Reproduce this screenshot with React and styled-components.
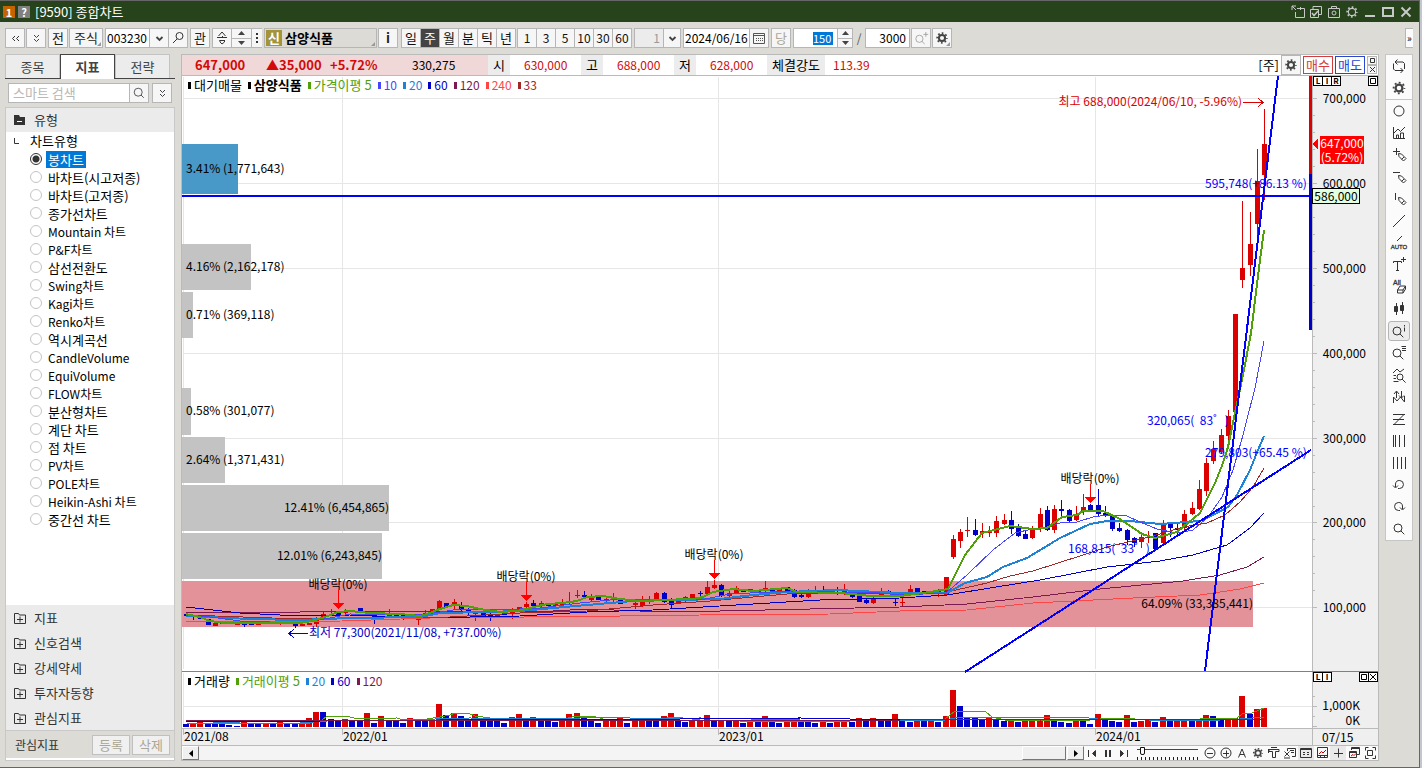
import React, { useState } from "react";
import styled, { createGlobalStyle, css } from "styled-components";

const GlobalStyle = createGlobalStyle`
  * {
    box-sizing: border-box;
  }

  body {
    margin: 0;
    background: #dcdbd6;
  }

  body, button, input, select {
    font-family: "Noto Sans CJK KR", "Noto Sans", sans-serif;
    font-size: 12px;
    line-height: 16px;
    color: #000;
  }

  button, input, select {
    margin: 0;
    padding: 0;
    border: 0;
    border-radius: 0;
    outline: none;
  }

  svg {
    display: block;
    flex: none;
  }
`;

/* ---------- frame ---------- */

const Shell = styled.div`
  border-right: 2px solid #c3c6cc;
`;

const Frame = styled.div`
  display: flex;
  flex-direction: column;
  min-height: 100vh;
  background: #dcdbd6;
  border-right: 1px solid #666;
  border-bottom: 1px solid #666;
`;

const TitleBar = styled.header`
  display: flex;
  align-items: center;
  gap: 3px;
  height: 22px;
  padding: 0 6px 0 3px;
  border-top: 1px solid #666;
  background: #26431c;
  color: #fff;
`;

const TitleBadge = styled.span`
  width: 12px;
  height: 12px;
  background: ${(p) => p.$color};
  font-size: 11px;
  font-weight: bold;
  line-height: 12px;
  text-align: center;
`;

const Title = styled.h1`
  flex: 1;
  margin: 0 0 0 2px;
  font-size: 13px;
  font-weight: normal;
  line-height: 20px;
`;

const TitleButton = styled.button`
  display: flex;
  align-items: center;
  justify-content: center;
  width: 15px;
  height: 20px;
  background: none;
  color: #c8c8c8;
`;

const Body = styled.div`
  display: flex;
  flex: 1;
  gap: 6px;
  padding: 0 6px 6px 5px;
`;

/* ---------- toolbar ---------- */

const Toolbar = styled.div`
  display: flex;
  align-items: center;
  gap: 1px;
  height: 32px;
  padding: 0 6px 0 5px;
`;

const Group = styled.div`
  display: flex;
  width: ${(p) => p.$w}px;
  height: 20px;
  margin-left: ${(p) => p.$space || 0}px;
  border: 1px solid #b6b6b6;
  background: #fff;

  & > * + * {
    border-left: 1px solid #b6b6b6;
  }
`;

const ToolButton = styled.button`
  position: relative;
  display: flex;
  align-items: center;
  justify-content: center;
  width: ${(p) => p.$w || 20}px;
  height: 20px;
  margin-left: ${(p) => p.$space || 0}px;
  border: 1px solid #b6b6b6;
  background: ${(p) => (p.$flat ? "#dcdbd6" : "#f6f6f6")};
  font-size: 13px;
  color: ${(p) => (p.$dim ? "#aaa695" : "#222")};
  white-space: nowrap;

  ${(p) =>
    p.$corner &&
    css`
      &::after {
        content: "";
        position: absolute;
        right: 1px;
        bottom: 1px;
        border: 2px solid transparent;
        border-right-color: #999;
        border-bottom-color: #999;
      }
    `}
`;

const NameButton = styled(ToolButton)`
  justify-content: flex-start;
  gap: 3px;
  padding-left: 1px;
  font-weight: bold;
  color: #000;
`;

const NameTag = styled.span`
  width: 16px;
  height: 16px;
  background: #a3943a;
  color: #fff;
  line-height: 15px;
`;

const Cell = styled.button`
  display: flex;
  flex: ${(p) => (p.$w ? "none" : "1")};
  align-items: center;
  justify-content: center;
  width: ${(p) => (p.$w ? `${p.$w}px` : "auto")};
  background: ${(p) => (p.$active ? "#444" : "#f6f6f6")};
  color: ${(p) => (p.$active ? "#fff" : "#111")};
  font-size: ${(p) => (p.$num ? 12 : 13)}px;
`;

const Field = styled.input`
  flex: 1;
  min-width: 0;
  padding: 0 ${(p) => (p.$tight ? 1 : 3)}px;
  background: #fff;
  text-align: ${(p) => p.$align || "left"};
`;

const SmallSelect = styled.select`
  flex: 1;
  min-width: 0;
  padding: 0 3px;
  appearance: none;
  background: #ececec;
  color: #999;
  text-align-last: right;
  opacity: 1;
`;

const SelectedField = styled.div`
  display: flex;
  flex: 1;
  align-items: center;
  justify-content: flex-end;
  padding-right: 4px;
`;

const SelectedInput = styled.input`
  width: 20px;
  height: 13px;
  background: #0078d7;
  color: #fff;
  font-size: 11px;
  line-height: 13px;
`;

const Spinner = styled.div`
  display: flex;
  flex: none;
  flex-direction: column;
  width: ${(p) => p.$w}px;
  background: #f6f6f6;

  & > button + button {
    border-top: 1px solid #b6b6b6;
  }
`;

const SpinButton = styled.button`
  display: flex;
  flex: 1;
  align-items: center;
  justify-content: center;
  background: #f6f6f6;
`;

const Slash = styled.span`
  width: 10px;
  text-align: center;
  color: #555;
`;

const Spacer = styled.div`
  flex: 1;
`;

const MoreButton = styled.button`
  width: 8px;
  height: 20px;
  border: 1px solid #b6b6b6;
  border-right: 0;
  background: #fbfbfb;
  font-size: 10px;
  line-height: 18px;
`;

/* ---------- sidebar ---------- */

const Sidebar = styled.aside`
  display: flex;
  flex: none;
  flex-direction: column;
  width: 170px;
`;

const Tabs = styled.div`
  display: flex;
  height: 25px;
  padding-right: 5px;
  border-bottom: 1px solid #444;
`;

const Tab = styled.button`
  flex: 1;
  height: ${(p) => (p.$active ? 25 : 24)}px;
  border: 1px solid #c3c3c3;
  border-bottom: 0;
  background: #ececec;
  color: #444;
  font-size: 13px;

  ${(p) =>
    p.$active &&
    css`
      border-color: #444;
      background: #fff;
      font-weight: bold;
    `}
`;

const SearchRow = styled.form`
  display: flex;
  gap: 3px;
  padding: 4px 3px;
`;

const SearchInput = styled(Field)`
  padding: 0 4px;
  font-size: 13px;

  &::placeholder {
    color: #b8b8b8;
  }
`;

const Panel = styled.section`
  display: flex;
  flex: 1;
  flex-direction: column;
  border: 1px solid #c8c8c8;
  background: #fff;
`;

const SectionButton = styled.button`
  display: flex;
  align-items: center;
  gap: 8px;
  height: ${(p) => (p.$open ? 24 : 25)}px;
  padding-left: 8px;
  background: #ebebeb;
  color: #333;
  font-size: 13px;
  text-align: left;
`;

const TypeList = styled.fieldset`
  flex: 1;
  margin: 0;
  padding: 0 0 0 24px;
  border: 0;
  background: #fff;
`;

const TypeLegend = styled.legend`
  display: flex;
  align-items: center;
  gap: 10px;
  height: 18px;
  margin-left: -16px;
  padding: 0;
  font-size: 13px;
  line-height: 18px;
`;

const TypeRow = styled.label`
  display: flex;
  align-items: center;
  gap: 4px;
  height: 18px;
`;

const Radio = styled.input`
  flex: none;
  width: 12px;
  height: 12px;
  appearance: none;
  border: 1px solid #c4c4c4;
  border-radius: 50%;
  background: #fff;

  &:checked {
    border-color: #333;
    background: radial-gradient(circle, #333 0 3px, #fff 4px);
  }
`;

const TypeName = styled.span`
  height: 17px;
  padding: 0 2px;
  background: ${(p) => (p.$on ? "#0078d7" : "none")};
  color: ${(p) => (p.$on ? "#fff" : "#000")};
  font-size: ${(p) => (p.$latin ? 12 : 13)}px;
  line-height: 17px;
  white-space: nowrap;
`;

const PanelFooter = styled.div`
  display: flex;
  align-items: center;
  gap: 2px;
  height: 30px;
  padding: 0 4px 0 9px;
  border-top: 1px solid #c8c8c8;
  border-bottom: 2px solid #fff;
  background: #dcdbd6;
  color: #333;
`;

const FooterLabel = styled.span`
  flex: 1;
`;

const FooterButton = styled.button`
  width: 38px;
  height: 20px;
  border: 1px solid #c0c0c0;
  background: #f0f0f0;
  color: #aaa695;
  font-size: 13px;
`;

/* ---------- chart panel ---------- */

const ChartPanel = styled.main`
  flex: 1;
  min-width: 0;
  border: 1px solid #bababa;
  background: #fff;
`;

const QuoteBar = styled.div`
  display: flex;
  align-items: stretch;
  height: 21px;
  border-bottom: 1px solid #bababa;
  line-height: 20px;
`;

const QuoteMain = styled.div`
  display: flex;
  width: 306px;
  padding-left: 13px;
  background: #f0d8d8;
`;

const Price = styled.strong`
  width: ${(p) => p.$w}px;
  color: #d20a0a;
  font-size: 13px;
  white-space: nowrap;
`;

const QuoteLabel = styled.span`
  width: ${(p) => p.$w || 22}px;
  background: #ececec;
  font-size: 13px;
  text-align: center;
`;

const QuoteValue = styled.span`
  width: 71px;
  padding-left: ${(p) => p.$pad || 14}px;
  color: #d20a0a;
`;

const QuoteActions = styled.div`
  display: flex;
  flex: 1;
  align-items: center;
  justify-content: flex-end;
  gap: 2px;
  padding-right: 1px;
  font-size: 13px;
`;

const TradeButton = styled.button`
  width: 30px;
  height: 18px;
  border: 1px solid ${(p) => p.$color};
  background: #fff;
  color: ${(p) => p.$color};
  font-size: 13px;
  line-height: 16px;
`;

const MiniStack = styled.div`
  display: flex;
  flex-direction: column;
`;

const MiniButton = styled.button`
  display: flex;
  align-items: center;
  justify-content: center;
  width: 10px;
  height: 9px;
  border: 1px solid #b6b6b6;
  background: #f6f6f6;
`;

const Pane = styled.div`
  position: relative;
  border-bottom: 1px solid ${(p) => p.$line || "#bababa"};
`;

const ChartSvg = styled.svg`
  width: 100%;
  height: auto;
  overflow: visible;
  shape-rendering: crispEdges;
`;

const Legend = styled.div`
  position: absolute;
  top: 1px;
  left: 6px;
  display: flex;
  gap: 6px;
`;

const LegendItem = styled.span`
  display: flex;
  align-items: center;
  gap: 3px;
  color: ${(p) => p.$color};
  font-size: ${(p) => (p.$num ? 12 : 13)}px;
  font-weight: ${(p) => (p.$bold ? "bold" : "normal")};

  &::before {
    content: "";
    width: 3px;
    height: 7px;
    background: ${(p) => p.$color};
  }
`;

const ScaleButtons = styled.div`
  position: absolute;
  top: 0;
  right: 0;
  display: flex;
  justify-content: space-between;
  width: 65px;
  height: 10px;
`;

const ScaleSet = styled.div`
  display: flex;
`;

const ScaleButton = styled.button`
  display: flex;
  align-items: center;
  justify-content: center;
  width: 10px;
  height: 10px;
  margin-right: -1px;
  border: 1px solid #000;
  background: #fff;
  font-size: 8px;
  font-weight: bold;
  line-height: 8px;

  &:last-child {
    margin-right: 0;
  }
`;

const ScrollRow = styled.div`
  display: flex;
  height: 14px;
`;

const Track = styled.div`
  display: flex;
  flex: 1;
  justify-content: flex-end;
  padding-right: 1px;
  background: #f4f4f4;
`;

const ScrollButton = styled.button`
  display: flex;
  align-items: center;
  justify-content: center;
  width: ${(p) => p.$w}px;
  height: 14px;
  border: 1px solid #fff;
  border-right-color: #777;
  border-bottom-color: #777;
  background: #f0f0f0;
`;

const FootButton = styled.button`
  display: flex;
  align-items: center;
  justify-content: center;
  width: 16px;
  height: 14px;
  background: ${(p) => (p.$on ? "#e9e9e9" : "#fafafa")};
`;

const ZoomBox = styled.div`
  width: 70px;
  padding: 0 4px 0 5px;
  background: #fafafa;
`;

const ZoomRange = styled.input`
  display: block;
  width: 100%;
  height: 14px;
  appearance: none;
  background:
    linear-gradient(#444, #444) 0 3px / 100% 1px no-repeat,
    repeating-linear-gradient(90deg, #222 0 1px, transparent 1px 4px) 0 11px / 100% 3px no-repeat;

  &::-webkit-slider-thumb {
    width: 5px;
    height: 8px;
    margin-top: -4px;
    appearance: none;
    border: 1px solid #111;
    border-radius: 0 0 2px 2px;
    background: #fff;
  }
`;

/* ---------- drawing tools ---------- */

const Tools = styled.nav`
  align-self: flex-start;
  flex: none;
  width: 28px;
  border: 1px solid #c6c6c6;
  background: #fbfbfb;
`;

const ToolItem = styled.button`
  display: flex;
  align-items: center;
  justify-content: center;
  width: 22px;
  height: ${(p) => (p.$on ? 20 : 22)}px;
  margin: ${(p) => (p.$on ? "1px 2px" : "0 2px")};
  border: ${(p) => (p.$on ? "1px solid #b4b4b4" : "0")};
  border-radius: 3px;
  background: ${(p) => (p.$on ? "#ececec" : "none")};
`;

const ToolDivider = styled.hr`
  height: 1px;
  margin: 0;
  border: 0;
  background: #c6c6c6;
`;

/* ---------- icons ---------- */

const Icon = ({ size = 20, box = 20, color = "#333", children }) => (
  <svg
    width={size}
    height={size}
    viewBox={`0 0 ${box} ${box}`}
    fill="none"
    stroke={color}
    aria-hidden="true"
  >
    {children}
  </svg>
);

const Gear = ({ size = 20, color = "#444", thin }) => (
  <Icon size={size} color={color}>
    <circle cx="10" cy="10" r={thin ? 4 : 3.4} strokeWidth={thin ? 1.2 : 2.2} />
    <circle cx="10" cy="10" r="5.4" strokeWidth="1.8" strokeDasharray="1.9 2.34" strokeDashoffset="0.95" />
  </Icon>
);

const Lens = ({ x = 9, y = 9, r = 4 }) => (
  <path d={`M${x - r} ${y}a${r} ${r} 0 1 0 ${2 * r} 0a${r} ${r} 0 1 0 ${-2 * r} 0M${x + r * 0.7} ${y + r * 0.7}l3.5 3.5`} />
);

const Pencil = () => <path d="M9.5 8.5l.5 3 4.500 4.500 2.500-2.500-4.500-4.500zM12.500 14.500l2.500-2.500" />;

const Chevron = () => (
  <Icon size={9} box={9} color="#444">
    <path d="M1.5 3l3 3 3-3" strokeWidth="1.8" />
  </Icon>
);

const DoubleDown = () => (
  <Icon size={9} box={9} color="#444">
    <path d="M2 1l2.5 2.5L7 1M2 5l2.5 2.5L7 5" />
  </Icon>
);

const Triangle = ({ dir }) => (
  <svg width="7" height="4" viewBox="0 0 7 4" fill="#444" aria-hidden="true">
    <path d={{ up: "M0 4h7L3.5 0z", down: "M0 0h7L3.5 4z" }[dir]} />
  </svg>
);

const SideTriangle = ({ dir }) => (
  <svg width="4" height="7" viewBox="0 0 4 7" fill="#000" aria-hidden="true">
    <path d={dir === "left" ? "M4 0v7L0 3.5z" : "M0 0v7L4 3.5z"} />
  </svg>
);

const FolderPlus = () => (
  <Icon size={12} box={12} color="#333">
    <path d="M0.5 11.500V1.500h4l1 1.500h6v8.500zM3 7.500h6M6 4.500v6" />
  </Icon>
);

const FolderMinus = () => (
  <svg width="12" height="12" viewBox="0 0 12 12" aria-hidden="true">
    <path d="M0 11V1h5l1 2h5v8z" fill="#333" />
    <path d="M3 7.500h5" stroke="#fff" />
  </svg>
);

const drawTools = [
  ["반복", <path d="M15.5 13V7.500l-1.500-1.500H6M8.500 3.500L6 6l2.500 2.500M4.500 7.500V13l1.500 1.500h8M11.500 12l2.500 2.500-2.500 2.500" />],
  ["설정", null],
  ["원", <circle cx="10" cy="10" r="5" />],
  ["지표 추가", <path d="M4.5 4v11.500H16M5 10l4-4 2.500 2.500L16 4M7.500 15v-3h2v3M11.500 15v-5h3v5" />],
  ["십자선", <><path d="M4 6.500h7M7.500 3v7" /><Pencil /></>],
  ["수평선", <><path d="M4 5.500h7" /><Pencil /></>],
  ["수직선", <><path d="M6.500 4v7" /><Pencil /></>],
  ["추세선", <path d="M4 16L16 4" />],
  ["자동추세선", <><path d="M8 8l5-5" /><text x="10" y="16" textAnchor="middle" fontSize="6" fontFamily="Liberation Sans" fill="#333" strokeWidth="0.3">AUTO</text></>],
  ["문자", <path d="M4.500 8V6.500h8V8M8.500 6.500v9M7 15.500h3M12 4.500h5M14.500 2v5" />],
  ["전체 지우기", <><text x="4" y="8" fontSize="7" fontFamily="Liberation Sans" fill="#333" strokeWidth="0.3">All</text><path d="M8.500 13l2.500-4h5.500v3L14 16H8.500zM8.500 13H14l2.500-4M14 13v3" /></>],
  ["캔들", <><path d="M7.500 4v12M13.500 3v12" /><path d="M5.500 7.500h3v5h-3zM11.500 6.500h3v5h-3z" fill="#333" /></>],
  ["정보 보기", <><Lens x={8} y={10} /><path d="M15.500 6.500v4M15.500 4v1.500" /></>],
  ["목록 보기", <><Lens x={8} y={10} /><path d="M12.500 3.500H17M13 5.500h4M13 7.500h4" /></>],
  ["패턴 검색", <><Lens x={11} y={12} r={3} /><path d="M4 8l4-4 3 3 4-3M4.500 10.500H7M4.500 13.500H7M4.500 16.500h5" /></>],
  ["비교", <path d="M4.500 16v-6l3.500 4 3.500-4 4 5v-6M7.500 11V4.500M5 7l2.500-3L10 7M12.500 4v6.500M10 8.500l2.500 2.500L15 8.500" />],
  ["피보나치", <path d="M4 5.500h12M4 10.500h11M4 15.500h12M15 5.500L5 15.500" />],
  ["시간대", <path d="M4.500 4v12M6.500 4v12M10.500 4v12M15.500 4v12" />],
  ["등간격", <path d="M4.500 4v12M8.500 4v12M12.500 4v12M16.500 4v12" />],
  ["되돌리기", <path d="M6.500 12V9a4 4 0 1 1 4 4.500H9M4 10.500l2.500 2.500L9 10.500" />],
  ["다시하기", <path d="M13.500 12V9a4 4 0 1 0-4 4.500H11M11 10.500l2.500 2.500 2.500-2.500" />],
  ["확대", <Lens />],
];

/* ---------- data ---------- */

const chartTypes = [
  "봉차트", "바차트(시고저종)", "바차트(고저종)", "종가선차트", "Mountain 차트", "P&F차트",
  "삼선전환도", "Swing차트", "Kagi차트", "Renko차트", "역시계곡선", "CandleVolume",
  "EquiVolume", "FLOW차트", "분산형차트", "계단 차트", "점 차트", "PV차트",
  "POLE차트", "Heikin-Ashi 차트", "중간선 차트",
];

const sections = ["지표", "신호검색", "강세약세", "투자자동향", "관심지표"];

const RED = "#dc0000";
const BLUE = "#0000c8";

// [up, body top, body bottom, wick top, wick bottom]
const candles = [
  [0, 614, 616], [0, 616, 617, 615, 620], [0, 616, 619], [0, 619, 625], [1, 623, 626], [1, 621, 624],
  [0, 622, 624], [1, 623, 625], [0, 623, 625, 622, 627], [0, 623, 625], [1, 623, 625], [0, 622, 624],
  [0, 622, 624], [1, 621, 624, 619, 625], [0, 622, 624], [0, 624, 626, 623, 628], [1, 624, 626], [1, 623, 625],
  [1, 619, 624, 617, 627], [1, 614, 619, 611, 620], [1, 614, 615, 609, 616], [0, 611, 616], [1, 611, 613, 609, 614], [1, 610, 612],
  [0, 608, 613], [0, 611, 615], [0, 614, 620, 612, 624], [0, 616, 618], [1, 613, 617, 609, 618], [0, 614, 616],
  [0, 615, 617, 613, 620], [0, 615, 617], [1, 619, 620, 617, 625], [1, 613, 614, 610, 616], [1, 609, 613], [1, 601, 609, 600, 610],
  [0, 603, 607], [1, 602, 606, 599, 609], [0, 605, 610, 602, 611], [0, 609, 611, 608, 615], [1, 613, 614, 612, 621], [0, 613, 617],
  [0, 614, 616, 613, 621], [1, 614, 616], [0, 613, 615], [1, 609, 613, 608, 619], [1, 607, 609], [1, 604, 607, 602, 608],
  [0, 603, 606, 600, 607], [1, 603, 605, 601, 607], [0, 603, 606], [1, 604, 606], [1, 603, 605, 599, 606], [1, 601, 603, 592, 604],
  [1, 595, 596, 590, 598], [0, 595, 597, 591, 598], [1, 596, 600, 594, 601], [0, 596, 600], [1, 599, 601, 597, 604], [1, 597, 600, 593, 602],
  [0, 598, 604], [0, 600, 602], [1, 603, 605, 602, 609], [1, 600, 606, 596, 607], [1, 599, 600, 596, 604], [1, 593, 599, 592, 600],
  [0, 593, 602, 592, 603], [0, 599, 605, 598, 608], [1, 601, 604], [1, 597, 601, 596, 603], [1, 594, 598], [0, 593, 594, 591, 596],
  [1, 587, 594, 581, 595], [1, 585, 588, 580, 589], [0, 585, 596, 584, 597], [1, 593, 596, 591, 597], [1, 588, 593, 586, 594], [0, 589, 592],
  [1, 589, 591], [1, 591, 593], [1, 588, 590, 581, 592], [0, 589, 591], [1, 588, 591], [0, 587, 591],
  [0, 590, 597, 589, 598], [0, 595, 597, 592, 598], [1, 590, 597, 589, 598], [1, 590, 592, 586, 593], [0, 590, 592, 586, 593], [0, 591, 594],
  [0, 592, 594, 587, 595], [1, 590, 594, 584, 595], [0, 593, 597, 592, 598], [0, 596, 602], [0, 600, 603, 599, 604], [1, 598, 603, 597, 604],
  [1, 592, 595, 588, 596], [0, 591, 593, 590, 594], [0, 602, 603, 599, 606], [1, 602, 603, 598, 606], [1, 589, 592, 585, 594], [0, 588, 592],
  [0, 591, 593], [0, 592, 594], [1, 590, 594, 589, 597], [1, 577, 595], [1, 539, 557, 535, 559], [1, 532, 541, 529, 548],
  [1, 530, 531, 517, 537], [0, 530, 535, 519, 536], [1, 531, 533, 523, 538], [1, 532, 533, 526, 537], [1, 521, 533, 516, 537], [1, 520, 524, 514, 525],
  [0, 520, 529, 511, 534], [0, 528, 536, 524, 537], [0, 534, 539, 530, 539], [1, 529, 538, 526, 539], [1, 514, 528, 508, 532], [0, 510, 530, 506, 531],
  [1, 509, 530, 505, 533], [0, 509, 511, 500, 516], [0, 510, 521, 509, 522], [1, 515, 520, 506, 521], [1, 507, 511, 494, 515], [0, 505, 510, 504, 511],
  [0, 505, 514, 489, 516], [0, 513, 516, 506, 517], [0, 515, 529, 514, 531], [0, 528, 531, 523, 532], [0, 530, 540, 529, 545], [0, 538, 543, 537, 547],
  [1, 537, 542, 535, 548], [1, 537, 538, 531, 543], [0, 533, 549], [1, 525, 543, 520, 544], [0, 524, 528, 523, 537], [0, 528, 530, 523, 535],
  [1, 514, 528, 510, 531], [1, 508, 514, 502, 515], [1, 489, 509, 480, 510], [1, 463, 491, 458, 496], [1, 449, 461, 441, 464], [1, 435, 452, 429, 454],
  [1, 416, 436, 410, 443], [1, 314, 412], [1, 268, 280, 201, 288], [1, 244, 265, 212, 276], [1, 181, 224, 149, 237], [1, 144, 175, 109, 200],
];

const volumes = [
  3, 4, 5, 3, 3, 3, 2, 1, 5, 4, 3, 4, 4, 5, 3, 3, 4, 9, 15, 15, 8, 6, 8, 6, 6, 14, 4, 11, 6, 6, 4, 9, 6,
  6, 7, 23, 12, 14, 11, 6, 13, 9, 8, 6, 4, 10, 13, 7, 10, 9, 6, 5, 9, 13, 14, 9, 7, 4, 7, 8, 10, 4, 7, 8,
  7, 6, 11, 14, 6, 5, 6, 7, 12, 6, 7, 6, 7, 4, 6, 5, 11, 6, 4, 6, 8, 5, 5, 4, 5, 4, 5, 6, 5, 9, 6, 9, 6, 6,
  13, 6, 5, 6, 6, 8, 5, 11, 37, 21, 10, 9, 8, 9, 7, 6, 7, 5, 6, 7, 8, 12, 7, 5, 4, 8, 6, 3, 13, 7, 6, 5, 12,
  5, 6, 7, 5, 10, 6, 7, 8, 6, 7, 12, 11, 7, 8, 9, 31, 13, 18, 19,
];

const averages = [
  { color: "#ff4646", points: "186,622 342,621 430,618 620,616 700,615 830,614 900,611 967,610 1033,603 1133,598 1200,595 1240,589 1264,583" },
  { color: "#7d1950", points: "186,612 300,612 342,611 553,611 587,609 640,611 720,611 900,607 967,604 1033,597 1100,589 1183,581 1220,575 1247,567 1264,557" },
  { color: BLUE, points: "186,607 240,613 300,616 350,615 420,618 520,616 587,612 653,610 753,604 820,600 900,598 947,595 990,588 1040,580 1107,567 1160,561 1193,555 1227,545 1250,528 1264,513" },
  { color: "#a02828", points: "186,615 300,619 346,618 450,617 520,613 587,611 653,605 710,601 753,597 787,594 900,593 947,592 987,583 1010,576 1033,571 1080,556 1107,547 1153,536 1183,527 1207,523 1225,515 1240,502 1253,487 1264,468" },
  { color: "#1e82d7", width: 2, points: "186,616 250,619 300,620 350,618 420,617 440,613 487,612 520,611 587,605 633,601 720,599 753,595 787,592 837,590 900,593 947,593 965,583 987,577 1003,567 1027,558 1060,538 1090,524 1107,521 1130,521 1160,524 1200,521 1213,515 1228,507 1237,495 1250,470 1258,450 1264,436" },
  { color: "#4646ff", points: "186,615 210,617 240,621 300,623 330,618 350,614 420,615 460,609 500,610 540,608 580,603 620,599 700,600 730,594 790,591 880,593 900,595 946,593 967,575 993,550 1015,533 1032,529 1047,528 1060,523 1077,522 1093,517 1107,515 1127,516 1140,522 1157,529 1177,533 1193,530 1208,517 1222,497 1233,470 1243,435 1255,388 1264,341" },
  { color: "#50a00a", width: 2, points: "186,614 200,617 210,621 225,623 300,623 312,621 325,617 338,612 350,611 370,613 400,614 420,616 427,614 440,609 453,605 467,606 480,609 500,612 517,611 530,608 547,604 563,603 577,601 587,597 603,596 620,599 640,601 660,600 693,599 703,597 713,592 733,589 753,591 787,588 797,592 837,593 853,594 870,596 900,596 930,592 948,589 965,555 982,533 1010,526 1033,529 1047,528 1062,517 1077,515 1083,511 1103,511 1120,519 1142,534 1155,538 1177,532 1200,513 1215,483 1223,463 1228,447 1235,413 1242,380 1251,333 1260,260 1264,230" },
];

const volumeAverages = [
  { color: "#50a00a", points: "186,723 240,724 290,724 310,723 322,720 327,716 346,716 358,719 397,718 403,720 420,720 440,717 450,715 455,713 468,713 475,716 490,718 520,719 550,720 565,719 575,716 593,716 603,719 660,719 675,717 700,720 740,721 850,721 900,719 945,719 955,711 985,711 992,717 1010,721 1040,720 1080,721 1100,719 1130,718 1140,720 1200,719 1237,718 1242,714 1252,713 1264,708" },
  { color: "#1e82d7", points: "186,721 240,723 300,723 340,720 400,720 470,718 560,719 600,717 660,719 700,718 800,720 940,721 960,717 1080,717 1098,719 1200,721 1240,719 1264,717" },
  { color: BLUE, points: "186,721 320,721 440,720 680,719 800,718 900,720 1264,719" },
  { color: "#7d1950", points: "186,720 440,720 600,720 900,720 1264,719" },
];

const profile = [
  { y: 144, h: 50, w: 56, fill: "#4898c8", label: "3.41% (1,771,643)" },
  { y: 244, h: 46, w: 69, label: "4.16% (2,162,178)" },
  { y: 292, h: 46, w: 11, label: "0.71% (369,118)" },
  { y: 388, h: 47, w: 9, label: "0.58% (301,077)" },
  { y: 437, h: 46, w: 43, label: "2.64% (1,371,431)" },
  { y: 485, h: 46, w: 207, label: "12.41% (6,454,865)", end: true },
  { y: 533, h: 46, w: 200, label: "12.01% (6,243,845)", end: true },
  { y: 581, h: 46, w: 1071, fill: "#e49299", label: "64.09% (33,385,441)", end: true },
];

const priceGrid = [
  [98, "700,000"], [183, "600,000"], [268, "500,000"], [353, "400,000"],
  [438, "300,000"], [522, "200,000"], [607, "100,000"],
];

const yearGrid = [342, 718, 1095];

const exDividends = [[338, 590], [526, 582], [714, 560], [1090, 484]];

const barX = (i) => Math.round(186 + i * 7.235);

const priceLegend = [
  ["대기매물", "#000"], ["삼양식품", "#000", "bold"], ["가격이평 5", "#50a00a"], ["10", "#4646ff"],
  ["20", "#1e82d7"], ["60", BLUE], ["120", "#7d1950"], ["240", "#ff4646"], ["33", "#a02828"],
];

const volumeLegend = [
  ["거래량", "#000"], ["거래이평 5", "#50a00a"], ["20", "#1e82d7"], ["60", BLUE], ["120", "#7d1950"],
];

/* ---------- parts ---------- */

const Legends = ({ items }) => (
  <Legend>
    {items.map(([name, color, bold]) => (
      <LegendItem key={name} $color={color} $bold={bold} $num={/^\d/.test(name)}>
        {name}
      </LegendItem>
    ))}
  </Legend>
);

const Lines = ({ items }) =>
  items.map((line) => (
    <polyline key={line.color} points={line.points} fill="none" stroke={line.color} strokeWidth={line.width || 1} />
  ));

const PriceChart = () => (
  <ChartSvg viewBox="182 76 1196 595" fontSize="12" role="img" aria-label="삼양식품 주봉 차트">
    <g stroke="#e6e6e6">
      {priceGrid.map(([y]) => <path key={y} d={`M183 ${y + 0.5}H1312`} />)}
      {[183, ...yearGrid].map((x) => <path key={x} d={`M${x + 0.5} 77V669`} />)}
    </g>

    {profile.map((p) => <rect key={p.y} x="182" y={p.y} width={p.w} height={p.h} fill={p.fill || "#c3c3c3"} />)}

    {candles.map(([up, top, bottom, high = top, low = bottom], i) => (
      <g key={i} fill={up ? RED : BLUE}>
        <rect x={barX(i)} y={high} width="1" height={low - high} />
        <rect x={barX(i) - 2} y={top} width="5" height={bottom - top} />
      </g>
    ))}
    <Lines items={averages} />

    <g stroke="#0000ff" strokeWidth="2">
      <path d="M182 196H1310" />
      <path d="M965 672L1311 450" />
      <path d="M1205 671L1278 76" />
    </g>

    {profile.map((p) => (
      <text key={p.y} x={p.end ? 182 + p.w : 186} y={p.y + (p.y === 144 ? 29 : 27)} textAnchor={p.end ? "end" : "start"}>
        {p.label}
      </text>
    ))}

    {exDividends.map(([x, y]) => (
      <g key={x}>
        <text x={x} y={y - 1} textAnchor="middle">배당락(0%)</text>
        <path d={`M${x + 0.5} ${y}v14`} stroke="#ff0000" />
        <path d={`M${x - 5} ${y + 13}h11l-5.5 6z`} fill="#ff0000" />
      </g>
    ))}

    <g fill={BLUE}>
      <text x="309" y="637">최저 77,300(2021/11/08, +737.00%)</text>
      <path d="M308 633.5H289M294 629l-5 4.5 5 4.5" fill="none" stroke={BLUE} />
    </g>
    <g fill={RED}>
      <text x="1242" y="106" textAnchor="end">최고 688,000(2024/06/10, -5.96%)</text>
      <path d="M1243 102.5h20M1258 98l5 4.5-5 4.5" fill="none" stroke={RED} />
    </g>
    <g fill="#0000ff">
      <text x="1205" y="188">595,748(+86.13 %)</text>
      <text x="1147" y="425">{"320,065(\u00a0 83˚\u00a0 \u00a0)"}</text>
      <text x="1205" y="457">279,803(+65.45 %)</text>
      <text x="1068" y="553">{"168,815(\u00a0 33˚\u00a0 \u00a0)"}</text>
    </g>

    <rect x="1309" y="76" width="3" height="98" fill={RED} />
    <rect x="1309" y="174" width="3" height="156" fill={BLUE} />

    <rect x="1312" y="76" width="66" height="595" fill="#efefef" />
    <path d="M1312.5 76V671" stroke="#bababa" />
    {priceGrid.map(([y, label], i) => (
      <g key={y}>
        <path d={`M1312 ${y + 0.5}h5`} stroke="#bababa" />
        {i < 6 && [17, 34, 51, 68].map((d) => <path key={d} d={`M1312 ${y + d + 0.5}h3`} stroke="#bababa" />)}
        <text x="1366" y={y + 5} textAnchor="end">{label}</text>
      </g>
    ))}
    <path d="M1318 138v12l-6-6z" fill="#ff0000" />
    <rect x="1320" y="136" width="44" height="28" fill="#ff0000" />
    <text x="1342" y="148" textAnchor="middle" fill="#fff">647,000</text>
    <text x="1342" y="162" textAnchor="middle" fill="#fff">(5.72%)</text>
    <rect x="1312.5" y="188.5" width="47" height="15" fill="#e1ffe1" stroke="#000" />
    <text x="1336" y="201" textAnchor="middle">586,000</text>
  </ChartSvg>
);

// a volume bar is red when it is higher than the one before it
const VolumeChart = () => (
  <ChartSvg viewBox="182 672 1196 56" fontSize="12" role="img" aria-label="거래량">
    <g stroke="#e6e6e6">
      <path d="M183 706.5H1312" />
      {[183, ...yearGrid].map((x) => <path key={x} d={`M${x + 0.5} 673V727`} />)}
    </g>
    {volumes.map((v, i) => (
      <rect key={i} x={barX(i) - 3} y={727 - v} width="6" height={v} fill={v > volumes[i - 1] ? RED : BLUE} />
    ))}
    <Lines items={volumeAverages} />
    <rect x="1312" y="672" width="66" height="56" fill="#efefef" />
    <path d="M1312.5 672v56M1312 696.5h3M1312 706.5h5M1312 716.5h3M1312 726.5h5" stroke="#bababa" />
    <text x="1360" y="710" textAnchor="end">1,000K</text>
    <text x="1360" y="725" textAnchor="end">0K</text>
  </ChartSvg>
);

const DateAxis = () => (
  <ChartSvg viewBox="182 729 1196 16" fontSize="12" role="img" aria-label="날짜">
    <rect x="182" y="729" width="1196" height="16" fill="#efefef" />
    <path d="M183.5 729v6M342.5 729v6M718.5 729v6M1095.5 729v6M1312.5 729v16" stroke="#bababa" />
    <text x="184" y="741">2021/08</text>
    <text x="343" y="741">2022/01</text>
    <text x="719" y="741">2023/01</text>
    <text x="1096" y="741">2024/01</text>
    <text x="1322" y="742">07/15</text>
  </ChartSvg>
);

const footIcons = [
  ["축소", <><circle cx="8" cy="7" r="5" /><path d="M5 7.5h6" /></>],
  ["확대", <><circle cx="8" cy="7" r="5" /><path d="M5 7.5h6M8.5 4.5v6" /></>],
  ["글꼴", <path d="M4.5 11.5L8 3l3.5 8.5M6 8.5h4" />],
  ["설정", "gear"],
  ["도구", <path d="M3 3.5h10v2H9.5v6h-3v-6H3zM5 1.5h6M2.5 3v4" />],
  ["저장", <path d="M5.5 5V2.500h8v8H10M8 4.500h4M9 6.500h3M2.500 5.500l5 5M2.500 10.500l5-5M2 12h6" />],
  ["표", <><path d="M2.500 2.500h11v9h-11zM2.500 3.500h11" /><path d="M5 6.500h2M5 8.500h2M9 6.500h2M9 8.500h2" /></>, true],
  ["차트 보기", <><path d="M3.500 1.500h10v10h-10zM3.500 9.500h10M6.500 9.500v2M10.500 9.500v2" /><path d="M5 8l2.500-2.500L9 7l3-3" stroke="#c00000" /></>],
  ["십자선", <path d="M8.500 2.500v9M4 7.500h9" />, true],
  ["새 창", <><path d="M5.500 4V1.500h8v7H11M5.500 2.500h8" /><path d="M3.500 5.500h7v6h-7zM3.500 6.500h7" /><path d="M5 10l2-1.500 1 1 2-2" stroke="#c00000" /></>],
  ["전체화면", <path d="M5.500 4.500h5v5h-5zM3.500 4.500v-3h3M10.500 1.500h3v3M13.500 9.500v3h-3M6.500 12.500h-3v-3" />],
];

const TopToolbar = () => {
  const [period, setPeriod] = useState("주");

  return (
    <Toolbar>
      <ToolButton aria-label="이전">
        <Icon size={9} box={9}><path d="M4 2L1.5 4.5 4 7M8 2L5.5 4.5 8 7" /></Icon>
      </ToolButton>
      <ToolButton aria-label="펼치기"><DoubleDown /></ToolButton>
      <ToolButton $space={1}>전</ToolButton>
      <ToolButton $w={34} $corner>주식</ToolButton>
      <Group $w={83} $space={1}>
        <Field defaultValue="003230" aria-label="종목코드" $tight />
        <Cell $w={19} aria-label="종목 목록"><Chevron /></Cell>
        <Cell $w={19} aria-label="종목 검색">
          <Icon size={14} box={14}><circle cx="8.5" cy="5" r="3.5" /><path d="M6 8l-4 4" /></Icon>
        </Cell>
      </Group>
      <ToolButton $space={1}>관</ToolButton>
      <Group $w={50} $space={1}>
        <Cell $w={18} aria-label="종목 이동">
          <Icon size={14} box={14}><path d="M7 1L3.5 5M7 1l3.5 4M2 6.5h10M7.5 5v2M4.5 9.5h5M5 9v2l2 2 2.5-2V9" /></Icon>
        </Cell>
        <Spinner $w={20}>
          <SpinButton aria-label="이전 종목"><Triangle dir="up" /></SpinButton>
          <SpinButton aria-label="다음 종목"><Triangle dir="down" /></SpinButton>
        </Spinner>
        <Cell aria-label="더보기">
          <Icon size={10} box={10}><path d="M5 0v10" strokeWidth="2" strokeDasharray="2 2" /></Icon>
        </Cell>
      </Group>
      <NameButton $w={113} $space={1} $flat $corner><NameTag>신</NameTag>삼양식품</NameButton>
      <ToolButton aria-label="종목 정보"><b>i</b></ToolButton>
      <Group $w={115} $space={2}>
        {["일", "주", "월", "분", "틱", "년"].map((p) => (
          <Cell key={p} $active={p === period} onClick={() => setPeriod(p)}>{p}</Cell>
        ))}
      </Group>
      <Group $w={115}>
        {["1", "3", "5", "10", "30", "60"].map((n) => <Cell key={n} $num>{n}</Cell>)}
      </Group>
      <Group $w={47} $space={1}>
        <SmallSelect disabled aria-label="주기"><option>1</option></SmallSelect>
        <Cell $w={17} aria-label="주기 선택"><Chevron /></Cell>
      </Group>
      <Group $w={86} $space={1}>
        <Field defaultValue="2024/06/16" aria-label="기준일" $tight />
        <Cell $w={19} aria-label="달력">
          <Icon size={12} box={12} color="#555">
            <path d="M0.5 1.5h11v10H0.5zM0.5 3.5h11" />
            <path d="M3 6.5h7M3 8.5h7" strokeDasharray="1 1" />
          </Icon>
        </Cell>
      </Group>
      <ToolButton $space={1} $dim>당</ToolButton>
      <Group $w={60} $space={1}>
        <SelectedField><SelectedInput defaultValue="150" aria-label="표시 개수" /></SelectedField>
        <Spinner $w={15}>
          <SpinButton aria-label="증가"><Triangle dir="up" /></SpinButton>
          <SpinButton aria-label="감소"><Triangle dir="down" /></SpinButton>
        </Spinner>
      </Group>
      <Slash>/</Slash>
      <Group $w={45}><Field defaultValue="3000" aria-label="전체 개수" $align="right" /></Group>
      <ToolButton aria-label="확대">
        <Icon size={16} box={20} color="#999"><Lens x={8} y={11} r={4.5} /><path d="M13 5.5h6M16 2.5v6" /></Icon>
      </ToolButton>
      <ToolButton $corner aria-label="설정"><Gear size={18} /></ToolButton>
      <Spacer />
      <MoreButton aria-label="더보기">»</MoreButton>
    </Toolbar>
  );
};

const TypeSidebar = () => {
  const [selected, setSelected] = useState(chartTypes[0]);

  return (
    <Sidebar>
      <Tabs>
        <Tab>종목</Tab>
        <Tab $active>지표</Tab>
        <Tab>전략</Tab>
      </Tabs>
      <SearchRow onSubmit={(e) => e.preventDefault()}>
        <Group $w={141}>
          <SearchInput placeholder="스마트 검색" aria-label="스마트 검색" />
          <Cell $w={19} aria-label="검색"><Icon size={16}><Lens r={5} /></Icon></Cell>
        </Group>
        <ToolButton type="button" aria-label="펼치기"><DoubleDown /></ToolButton>
      </SearchRow>
      <Panel>
        <SectionButton $open><FolderMinus />유형</SectionButton>
        <TypeList>
          <TypeLegend>
            <Icon size={6} box={6}><path d="M0.5 0v5.500H5" /></Icon>
            차트유형
          </TypeLegend>
          {chartTypes.map((name) => (
            <TypeRow key={name}>
              <Radio
                type="radio"
                name="chartType"
                checked={selected === name}
                onChange={() => setSelected(name)}
              />
              <TypeName $on={selected === name} $latin={/^[A-Z]/.test(name)}>{name}</TypeName>
            </TypeRow>
          ))}
        </TypeList>
        {sections.map((name) => (
          <SectionButton key={name}><FolderPlus />{name}</SectionButton>
        ))}
        <PanelFooter>
          <FooterLabel>관심지표</FooterLabel>
          <FooterButton>등록</FooterButton>
          <FooterButton>삭제</FooterButton>
        </PanelFooter>
      </Panel>
    </Sidebar>
  );
};

const Quotes = () => (
  <QuoteBar>
    <QuoteMain>
      <Price $w={71}>647,000</Price>
      <Price $w={64}>▲35,000</Price>
      <Price $w={82}>+5.72%</Price>
      <span>330,275</span>
    </QuoteMain>
    <QuoteLabel>시</QuoteLabel>
    <QuoteValue>630,000</QuoteValue>
    <QuoteLabel>고</QuoteLabel>
    <QuoteValue>688,000</QuoteValue>
    <QuoteLabel>저</QuoteLabel>
    <QuoteValue>628,000</QuoteValue>
    <QuoteLabel $w={58}>체결강도</QuoteLabel>
    <QuoteValue $pad={8}>113.39</QuoteValue>
    <QuoteActions>
      <span>[주]</span>
      <ToolButton aria-label="차트 설정"><Gear size={18} /></ToolButton>
      <TradeButton $color="#d23c3c">매수</TradeButton>
      <TradeButton $color="#2846d2">매도</TradeButton>
      <MiniStack>
        <MiniButton aria-label="최대화"><Icon size={5} box={5}><path d="M0.5 0.5h4v4h-4z" /></Icon></MiniButton>
        <MiniButton aria-label="닫기"><Icon size={5} box={5}><path d="M0 0l5 5M5 0L0 5" /></Icon></MiniButton>
      </MiniStack>
    </QuoteActions>
  </QuoteBar>
);

const ScrollBar = () => (
  <ScrollRow>
    <ScrollButton $w={17} aria-label="왼쪽"><SideTriangle dir="left" /></ScrollButton>
    <Track><ScrollButton $w={44} aria-label="스크롤" /></Track>
    <ScrollButton $w={17} aria-label="오른쪽"><SideTriangle dir="right" /></ScrollButton>
    <FootButton aria-label="처음">
      <Icon size={14} box={14}><path d="M3.5 4v7" /><path d="M10.500 4.500v6l-3-3z" fill="#333" /></Icon>
    </FootButton>
    <FootButton aria-label="일시정지">
      <Icon size={14} box={14}><path d="M5 4v7M9 4v7" strokeWidth="2" /></Icon>
    </FootButton>
    <FootButton aria-label="끝">
      <Icon size={14} box={14}><path d="M10.5 4v7" /><path d="M3.500 4.500v6l3-3z" fill="#333" /></Icon>
    </FootButton>
    <ZoomBox><ZoomRange type="range" defaultValue="5" aria-label="확대 비율" /></ZoomBox>
    {footIcons.map(([name, art, on], i) => (
      <FootButton key={i} aria-label={name} $on={on}>
        {art === "gear" ? <Gear size={16} /> : (
          <svg width="16" height="14" viewBox="0 0 16 14" fill="none" stroke="#333" aria-hidden="true">{art}</svg>
        )}
      </FootButton>
    ))}
  </ScrollRow>
);

const App = () => (
  <Shell>
    <GlobalStyle />
    <Frame>
      <TitleBar>
        <TitleBadge $color="#c36400">1</TitleBadge>
        <TitleBadge $color="#808080">?</TitleBadge>
        <Title>[9590] 종합차트</Title>
        <TitleButton aria-label="분리">
          <Icon size={14} box={14} color="currentColor"><path d="M1 1l4 4M1 5V1h4M6 3.500h7.500v9h-9V7M9.500 2v3" /></Icon>
        </TitleButton>
        <TitleButton aria-label="복사">
          <Icon size={14} box={14} color="currentColor"><path d="M1.500 4.500h8v8h-8zM4 4V1.500h8.500v8H10" /><path d="M3 8l2 2.500L9 6" strokeWidth="1.5" /></Icon>
        </TitleButton>
        <TitleButton aria-label="캡처">
          <Icon size={14} box={14} color="currentColor"><path d="M1.500 3.500h11v9h-11zM4.500 3V1.500h5V3" /><circle cx="7" cy="8" r="2" /></Icon>
        </TitleButton>
        <TitleButton aria-label="환경설정"><Gear size={18} color="currentColor" thin /></TitleButton>
        <TitleButton aria-label="최소화">
          <Icon size={12} box={12} color="currentColor"><path d="M1 10h10" strokeWidth="2" /></Icon>
        </TitleButton>
        <TitleButton aria-label="최대화">
          <Icon size={12} box={12} color="currentColor"><path d="M1 2h10v8H1z" strokeWidth="2" /></Icon>
        </TitleButton>
        <TitleButton aria-label="닫기">
          <Icon size={12} box={12} color="currentColor"><path d="M1.5 1.5l9 9M10.5 1.5l-9 9" strokeWidth="2" /></Icon>
        </TitleButton>
      </TitleBar>

      <TopToolbar />

      <Body>
        <TypeSidebar />

        <ChartPanel>
          <Quotes />
          <Pane $line="#808080">
            <PriceChart />
            <Legends items={priceLegend} />
            <ScaleButtons>
              <ScaleSet>
                <ScaleButton>L</ScaleButton>
                <ScaleButton>I</ScaleButton>
                <ScaleButton>R</ScaleButton>
              </ScaleSet>
              <ScaleSet>
                <ScaleButton aria-label="최대화"><Icon size={6} box={6} color="#000"><path d="M0.5 0.5h5v5h-5z" /></Icon></ScaleButton>
              </ScaleSet>
            </ScaleButtons>
          </Pane>
          <Pane>
            <VolumeChart />
            <Legends items={volumeLegend} />
            <ScaleButtons>
              <ScaleSet>
                <ScaleButton>L</ScaleButton>
                <ScaleButton>I</ScaleButton>
              </ScaleSet>
              <ScaleSet>
                <ScaleButton aria-label="최대화"><Icon size={6} box={6} color="#000"><path d="M0.5 0.5h5v5h-5z" /></Icon></ScaleButton>
                <ScaleButton aria-label="닫기"><Icon size={6} box={6} color="#000"><path d="M0 0l6 6M6 0L0 6" /></Icon></ScaleButton>
              </ScaleSet>
            </ScaleButtons>
          </Pane>
          <Pane>
            <DateAxis />
          </Pane>
          <ScrollBar />
        </ChartPanel>

        <Tools aria-label="그리기 도구">
          {drawTools.map(([name, art], i) => (
            <React.Fragment key={name}>
              {i === 2 && <ToolDivider />}
              <ToolItem aria-label={name} $on={i === 12}>
                {art ? <Icon>{art}</Icon> : <Gear />}
              </ToolItem>
            </React.Fragment>
          ))}
        </Tools>
      </Body>
    </Frame>
  </Shell>
);

export default App;
